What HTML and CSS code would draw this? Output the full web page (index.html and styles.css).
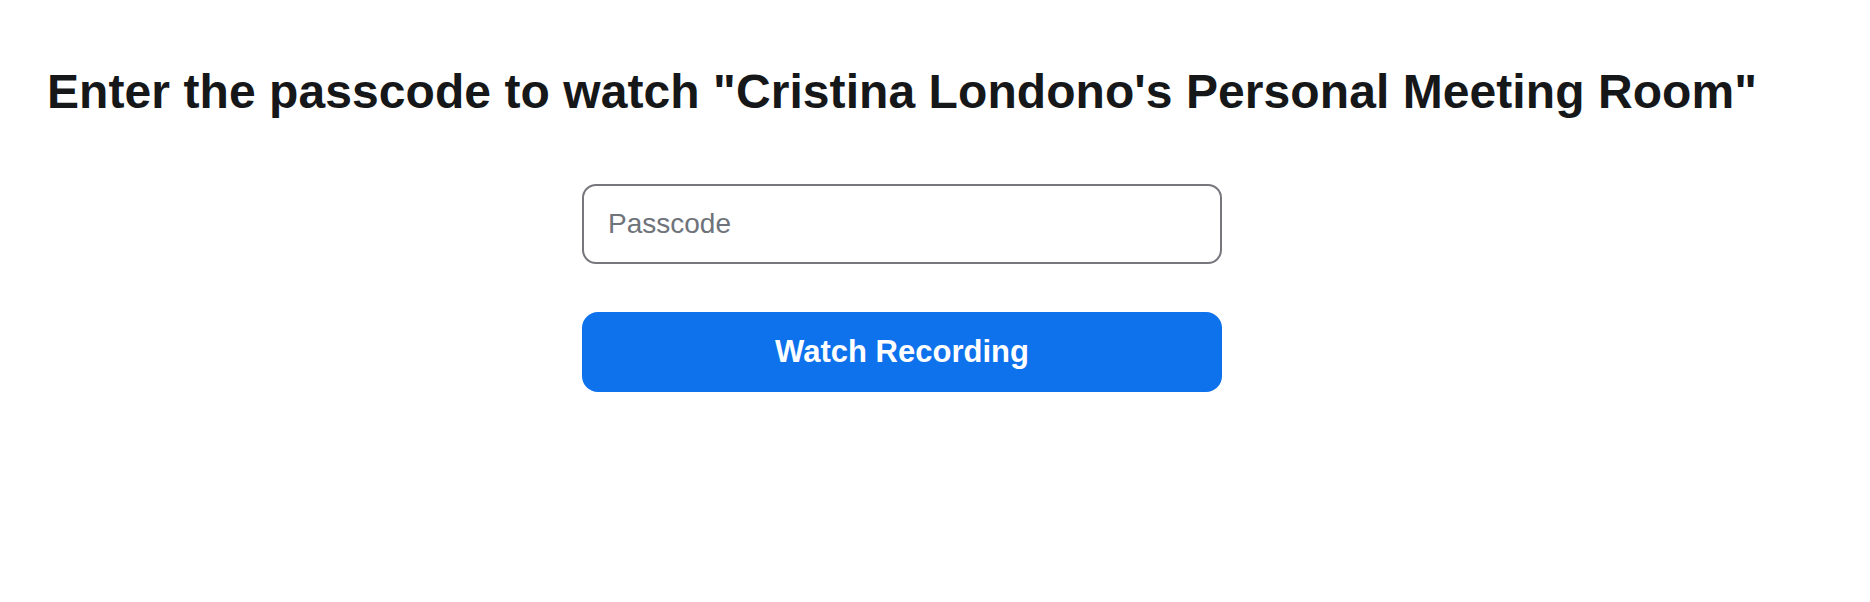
FILE: index.html
```html
<!DOCTYPE html>
<html lang="en">
<head>
<meta charset="utf-8">
<title>Watch Recording</title>
<link rel="stylesheet" href="styles.css">
</head>
<body>
<main class="page">
  <h1 class="title">Enter the passcode to watch "Cristina Londono's Personal Meeting Room"</h1>
  <form class="form">
    <input class="passcode" type="password" placeholder="Passcode">
    <button class="watch" type="button">Watch Recording</button>
  </form>
</main>
</body>
</html>
```

FILE: styles.css
```css
html, body {
  margin: 0;
  padding: 0;
  background: #ffffff;
}

body {
  font-family: "Liberation Sans", Arial, Helvetica, sans-serif;
  color: #18191b;
}

.page {
  width: 1714px;
  padding-left: 47px;
}

.title {
  margin: 64px 0 0;
  font-size: 48px;
  line-height: 56px;
  font-weight: 700;
  letter-spacing: 0.07px;
  color: #161719;
  white-space: nowrap;
}

.form {
  width: 640px;
  margin: 64px 0 0 535px;
  display: flex;
  flex-direction: column;
  gap: 48px;
}

.passcode {
  box-sizing: border-box;
  width: 640px;
  height: 80px;
  margin: 0;
  padding: 0 24px;
  border: 2px solid #76777d;
  border-radius: 14px;
  font-family: "Liberation Sans", Arial, Helvetica, sans-serif;
  font-size: 28px;
  color: #232333;
  background: #ffffff;
  outline: none;
}

.passcode::placeholder {
  color: #6f737a;
}

.watch {
  box-sizing: border-box;
  width: 640px;
  height: 80px;
  margin: 0;
  padding: 0;
  border: none;
  border-radius: 16px;
  background: #0e72ed;
  color: #ffffff;
  font-family: "Liberation Sans", Arial, Helvetica, sans-serif;
  font-size: 31px;
  font-weight: 700;
  cursor: pointer;
}
```
